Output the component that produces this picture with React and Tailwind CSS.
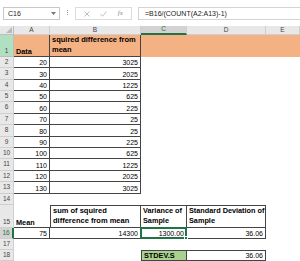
import React from "react";

const GRID = "grid grid-cols-[14px_36px_91px_46px_79px_1fr]";
const HDR = "bg-[#e8e8e8] border-r border-b border-[#cfcfcf] text-[#444] flex items-center justify-center text-[6.5px]";
const B = "border-[#444]";

const data = [
  [20, 3025], [30, 2025], [40, 1225], [50, 625], [60, 225], [70, 25],
  [80, 25], [90, 225], [100, 625], [110, 1225], [120, 2025], [130, 3025],
];
const heights = ["h-[11px]", "h-[12px]", "h-[11px]", "h-[11px]", "h-[12px]", "h-[11px]", "h-[12px]", "h-[11px]", "h-[11px]", "h-[12px]", "h-[11px]", "h-[12px]", "h-[11px]"];

function Toolbar() {
  return (
    <div className="h-[26px] bg-white flex items-start pt-[7px]">
      <div className="ml-[3px] w-[57px] h-[13px] border border-[#c8c8c8] flex items-center pl-[4px] text-[7px] text-[#222]">
        <span>C16</span>
        <svg className="ml-auto mr-[3px]" width="5" height="3" viewBox="0 0 5 3"><path d="M0 0h5L2.5 3z" fill="#777" /></svg>
      </div>
      <div className="ml-[7px] mt-[3px] flex flex-col gap-[1px]">
        <div className="w-[1px] h-[1px] bg-[#999]" />
        <div className="w-[1px] h-[1px] bg-[#999]" />
        <div className="w-[1px] h-[1px] bg-[#999]" />
      </div>
      <div className="ml-[7px] w-[57px] h-[13px] border border-[#dcdcdc] flex items-center justify-around px-[3px]">
        <svg width="6" height="6" viewBox="0 0 6 6"><path d="M0.5 0.5l5 5M5.5 0.5l-5 5" stroke="#b5b5b5" strokeWidth="0.9" /></svg>
        <svg width="7" height="6" viewBox="0 0 7 6"><path d="M0.5 3.2l2 2L6.5 0.6" stroke="#b5b5b5" strokeWidth="0.9" fill="none" /></svg>
        <span className="font-['Liberation_Serif',serif] italic text-[7px] text-[#888]">fx</span>
      </div>
      <div className="ml-[6px] flex-1 h-[13px] border-l border-y border-[#d4d4d4] flex items-center pl-[6px] text-[7px] text-[#222] whitespace-nowrap">
        =B16/(COUNT(A2:A13)-1)
      </div>
    </div>
  );
}

export default function App() {
  return (
    <div className="w-[300px] h-[261px] overflow-hidden bg-white font-['Liberation_Sans',Arial,sans-serif] text-[7px] leading-none text-black">
      <Toolbar />
      {/* column headers */}
      <div className={`${GRID} h-[9px]`}>
        <div className="bg-[#e8e8e8] border-r border-b border-[#bdbdbd] relative">
          <svg className="absolute right-[1px] bottom-[1px]" width="6" height="6" viewBox="0 0 6 6"><path d="M6 0v6H0z" fill="#b9b9b9" /></svg>
        </div>
        <div className={HDR}>A</div>
        <div className={HDR}>B</div>
        <div className="bg-[#d3d3d3] border-r border-[#cfcfcf] border-b-2 border-b-[#217346] text-[#217346] flex items-center justify-center text-[6.5px]">C</div>
        <div className={HDR}>D</div>
        <div className={HDR}>E</div>
      </div>
      {/* row 1 */}
      <div className={`${GRID} h-[22px]`}>
        <div className="bg-[#b0dfc2] border-r border-b border-[#bdbdbd] text-[#444] flex items-end justify-center pb-[2px] text-[6.5px]">1</div>
        <div className={`bg-[#f4b183] border-r border-b ${B} flex items-end pl-[2px] pb-[1px] font-bold text-[7.3px]`}>Data</div>
        <div className={`bg-[#f4b183] border-r border-b ${B} flex items-end pl-[2px] pb-[1px] font-bold text-[7.5px] leading-[10px]`}>
          <span>squired difference from<br />mean</span>
        </div>
        <div className="bg-[#f4b183]" />
        <div className="bg-[#f4b183]" />
        <div className="bg-[#f4b183]" />
      </div>
      {/* rows 2-13 */}
      {data.map(([a, b], i) => (
        <div key={i} className={`${GRID} ${heights[i]}`}>
          <div className={HDR}>{i + 2}</div>
          <div className={`border-r border-b ${B} flex items-end justify-end pr-[2px] pb-[1px]`}>{a}</div>
          <div className={`border-r border-b ${B} flex items-end justify-end pr-[2px] pb-[1px]`}>{b}</div>
          <div /><div /><div />
        </div>
      ))}
      {/* row 14 */}
      <div className={`${GRID} ${heights[12]}`}>
        <div className={HDR}>14</div>
        <div /><div /><div /><div /><div />
      </div>
      {/* row 15 */}
      <div className={`${GRID} h-[23px]`}>
        <div className={`${HDR} items-end pb-[2px]`}>15</div>
        <div className={`border-b ${B} flex items-end pl-[2px] pb-[1px] font-bold text-[7.3px]`}>Mean</div>
        <div className={`border border-l ${B} flex items-end pl-[2px] pb-[1px] font-bold text-[7.5px] leading-[10px]`}>
          <span>sum of squired<br />difference from mean</span>
        </div>
        <div className={`border-y border-r ${B} flex items-end pl-[2px] pb-[1px] font-bold text-[7.3px] leading-[10px]`}>
          <span>Variance of<br />Sample</span>
        </div>
        <div className={`border-y border-r ${B} flex items-end pl-[2px] pb-[1px] font-bold text-[7.3px] leading-[10px]`}>
          <span>Standard Deviation of<br />Sample</span>
        </div>
        <div />
      </div>
      {/* row 16 */}
      <div className={`${GRID} h-[11px]`}>
        <div className="bg-[#d3d3d3] border-r-2 border-r-[#217346] border-b border-[#cfcfcf] text-[#217346] flex items-center justify-center text-[6.5px]">16</div>
        <div className={`border-r border-b ${B} flex items-end justify-end pr-[2px] pb-[1px]`}>75</div>
        <div className={`border-r border-b ${B} flex items-end justify-end pr-[2px] pb-[1px]`}>14300</div>
        <div className="relative border-2 border-[#217346] -ml-[1px] -mt-[1px] h-[12px] flex items-end justify-end pr-[1px]">
          1300.00
          <div className="absolute -right-[3px] -bottom-[3px] w-[4px] h-[4px] bg-[#217346] border border-white" />
        </div>
        <div className={`border-r border-b ${B} flex items-end justify-end pr-[2px] pb-[1px]`}>36.06</div>
        <div />
      </div>
      {/* row 17 */}
      <div className={`${GRID} h-[11px]`}>
        <div className={HDR}>17</div>
        <div /><div /><div /><div /><div />
      </div>
      {/* row 18 */}
      <div className={`${GRID} h-[11px]`}>
        <div className={HDR}>18</div>
        <div /><div />
        <div className={`bg-[#a9d08e] border ${B} flex items-end pl-[2px] pb-[1px] font-bold text-[7.3px]`}>STDEV.S</div>
        <div className={`border-y border-r ${B} flex items-end justify-end pr-[2px] pb-[1px]`}>36.06</div>
        <div />
      </div>
    </div>
  );
}
